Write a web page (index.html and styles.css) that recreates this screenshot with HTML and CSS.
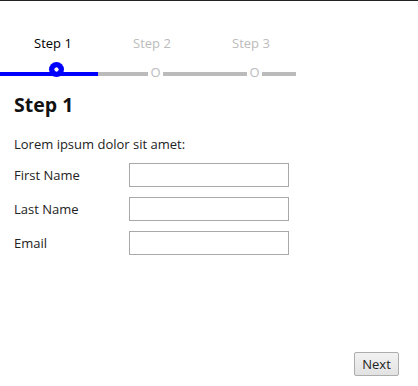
FILE: index.html
```html
<!DOCTYPE html>
<html>
<head>
<meta charset="utf-8">
<link rel="stylesheet" href="styles.css">
</head>
<body>
<div class="page">
  <div class="steps">
    <div class="step active">
      <div class="label">Step 1</div>
      <div class="track"><span class="dot"></span></div>
    </div>
    <div class="step">
      <div class="label">Step 2</div>
      <div class="track"><span class="ring">O</span></div>
    </div>
    <div class="step">
      <div class="label">Step 3</div>
      <div class="track"><span class="ring">O</span></div>
    </div>
  </div>
  <div class="content">
    <h3 class="title">Step 1</h3>
    <p class="intro">Lorem ipsum dolor sit amet:</p>
    <div class="form">
      <label class="field-label">First Name</label>
      <input class="field" type="text">
      <label class="field-label">Last Name</label>
      <input class="field" type="text">
      <label class="field-label">Email</label>
      <input class="field" type="text">
    </div>
  </div>
  <div class="footer">
    <button class="btn">Next</button>
  </div>
</div>
</body>
</html>
```

FILE: styles.css
```css
html, body {
  margin: 0;
  padding: 0;
  background: #fff;
}
body {
  font-family: "Open Sans", "Liberation Sans", sans-serif;
  font-size: 13px;
  color: #222;
}
.page {
  border-top: 1px solid #222;
  min-height: 385px;
  display: flex;
  flex-direction: column;
}
.steps {
  display: grid;
  grid-template-columns: 98px 99px 99px;
  padding-top: 34px;
}
.label {
  font-size: 13px;
  line-height: 17px;
  padding-left: 35px;
  color: #bbb;
}
.step.active .label {
  color: #000;
  padding-left: 34px;
}
.track {
  margin-top: 20px;
  height: 4px;
  background: #bbb;
  position: relative;
}
.step.active .track {
  background: #0000ff;
}
.dot {
  position: absolute;
  left: 49px;
  top: -10px;
  width: 15px;
  height: 15px;
  border-radius: 50%;
  background: radial-gradient(circle, #fff 0, #fff 1.8px, #0000ff 2.4px);
}
.ring {
  position: absolute;
  left: 50px;
  top: -7px;
  width: 15px;
  height: 14px;
  line-height: 14px;
  text-align: center;
  background: #fff;
  color: #bbb;
  font-size: 13px;
}
.content {
  padding: 0 14px;
}
.title {
  margin: 16px 0 0;
  font-size: 19.5px;
  line-height: 26px;
  font-weight: bold;
  color: #111;
}
.intro {
  margin: 17px 0 0;
  line-height: 18px;
}
.form {
  margin-top: 10px;
  display: grid;
  grid-template-columns: 115px 160px;
  row-gap: 10px;
  align-items: center;
}
.field-label {
  line-height: 18px;
}
.field {
  box-sizing: border-box;
  width: 160px;
  height: 24px;
  margin: 0;
  border: 1px solid #a9a9a9;
  border-radius: 0;
  background: #fff;
  padding: 2px 4px;
  font: inherit;
}
.footer {
  margin-top: auto;
  display: flex;
  justify-content: flex-end;
  padding: 0 19px 10px 0;
}
.btn {
  box-sizing: border-box;
  width: 45px;
  height: 24px;
  margin: 0;
  padding: 0;
  border: 1px solid #adadad;
  border-radius: 2px;
  background: linear-gradient(#f2f2f2, #e2e2e2);
  font-family: "Open Sans", "Liberation Sans", sans-serif;
  font-size: 13px;
  color: #222;
}
```
